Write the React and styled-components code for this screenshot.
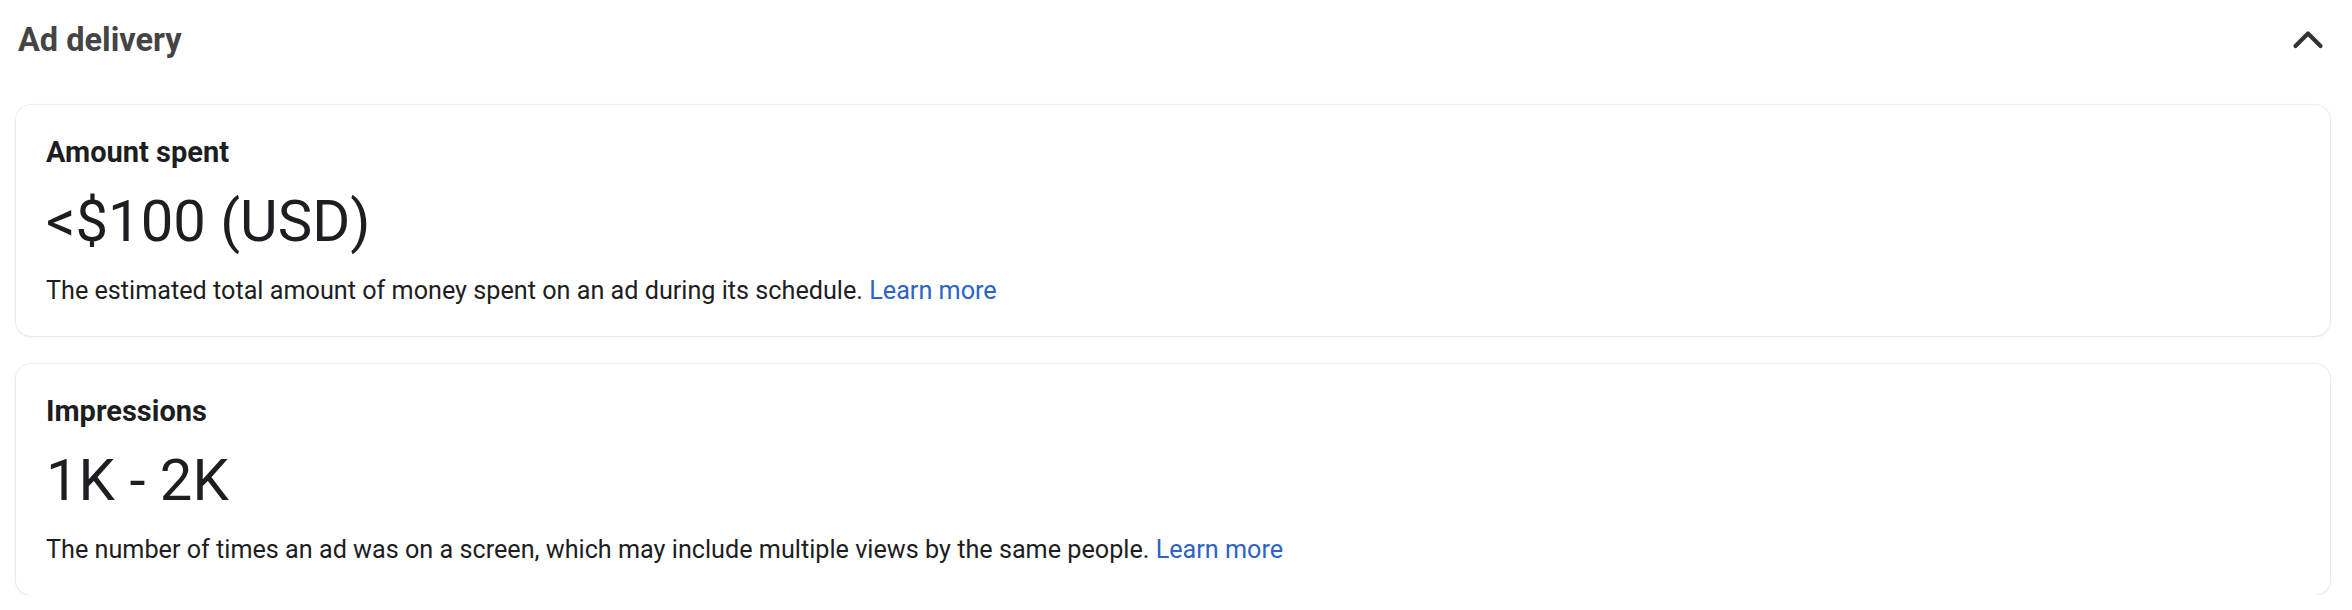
import React from "react"
import styled, { createGlobalStyle } from "styled-components"

const GlobalStyle = createGlobalStyle`
  body {
    margin: 0;
    background: #ffffff;
    font-family: Roboto, "Liberation Sans", Arial, sans-serif;
    color: #1c1e21;
  }
`

const Section = styled.section`
  padding: 0 22px 0 16px;
`

const Header = styled.div`
  display: flex;
  align-items: center;
  justify-content: space-between;
  height: 80px;
  padding: 0 6px 0 2px;
`

const Heading = styled.h2`
  margin: 0;
  font-size: 32.5px;
  line-height: 40px;
  font-weight: 700;
  color: #444444;
`

const Toggle = styled.button`
  display: flex;
  align-items: center;
  justify-content: center;
  padding: 0;
  border: 0;
  background: none;
  cursor: pointer;
`

const CardList = styled.div`
  display: flex;
  flex-direction: column;
  gap: 28px;
  margin-top: 25px;
`

const Card = styled.div`
  height: 231px;
  box-sizing: border-box;
  padding: 30px 30px 29px;
  border-radius: 15px;
  background: #ffffff;
  box-shadow: 0 0 0 1px rgba(0, 0, 0, 0.05), 0 1px 4px rgba(0, 0, 0, 0.07);
`

const Title = styled.div`
  font-size: 29px;
  line-height: 34px;
  font-weight: 700;
  color: #1c1e21;
`

const Value = styled.div`
  margin-top: 19px;
  font-size: 58px;
  line-height: 66px;
  font-weight: 400;
  color: #1c1e21;
`

const Description = styled.p`
  margin: 21px 0 0;
  font-size: 25.2px;
  line-height: 32px;
  color: #1c1e21;
`

const LearnMore = styled.a`
  color: #2d63c8;
  text-decoration: none;
`

const ChevronUp = () => (
  <svg width="32" height="20" viewBox="0 0 32 20" fill="none">
    <polyline
      points="3.5,16 16,3.5 28.5,16"
      stroke="#333333"
      strokeWidth="4.2"
      strokeLinecap="round"
      strokeLinejoin="round"
    />
  </svg>
)

const stats = [
  {
    title: "Amount spent",
    value: "<$100 (USD)",
    text: "The estimated total amount of money spent on an ad during its schedule."
  },
  {
    title: "Impressions",
    value: "1K - 2K",
    text: "The number of times an ad was on a screen, which may include multiple views by the same people."
  }
]

const App = () => (
  <>
    <GlobalStyle />
    <Section>
      <Header>
        <Heading>Ad delivery</Heading>
        <Toggle aria-label="Collapse">
          <ChevronUp />
        </Toggle>
      </Header>
      <CardList>
        {stats.map(stat => (
          <Card key={stat.title}>
            <Title>{stat.title}</Title>
            <Value>{stat.value}</Value>
            <Description>
              {stat.text} <LearnMore href="#">Learn more</LearnMore>
            </Description>
          </Card>
        ))}
      </CardList>
    </Section>
  </>
)

export default App
